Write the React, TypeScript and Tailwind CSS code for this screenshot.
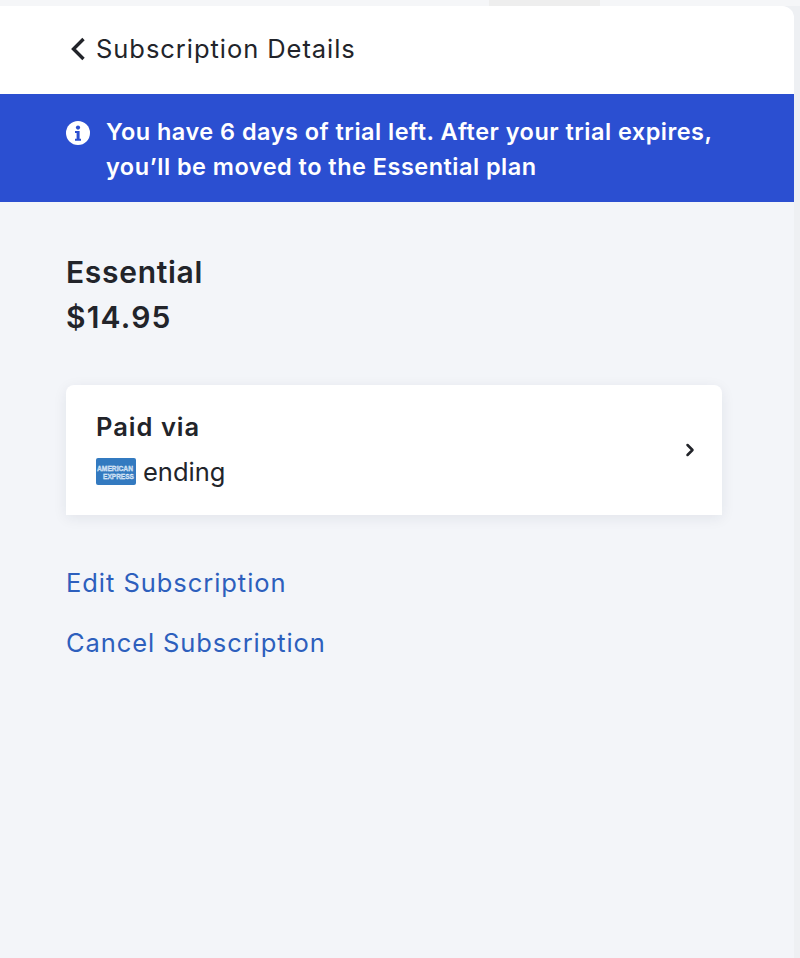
import React from "react";
import { ChevronRight } from "lucide-react";

const AmexLogo = () => (
  <svg width="40" height="27" viewBox="0 0 40 27" className="mb-[2px] shrink-0">
    <rect width="40" height="27" rx="2" fill="#337ac0" />
    <text x="1" y="13.2" fontFamily="Liberation Sans, sans-serif" fontSize="7" fontWeight="700" fill="#9cc3e8" stroke="#ffffff" strokeWidth="0.3" textLength="36" lengthAdjust="spacingAndGlyphs">
      AMERICAN
    </text>
    <text x="7" y="20.6" fontFamily="Liberation Sans, sans-serif" fontSize="7" fontWeight="700" fill="#9cc3e8" stroke="#ffffff" strokeWidth="0.3" textLength="31" lengthAdjust="spacingAndGlyphs">
      EXPRESS
    </text>
  </svg>
);

const InfoIcon = () => (
  <svg width="24" height="24" viewBox="0 0 24 24" className="shrink-0">
    <circle cx="12" cy="12" r="12" fill="#ffffff" />
    <circle cx="12" cy="6.6" r="2.1" fill="#2b4fd1" />
    <path d="M9 10h4.6v7.8h1.4v2H9v-2h1.6v-5.8H9z" fill="#2b4fd1" />
  </svg>
);

const BackChevron = () => (
  <svg width="16" height="24" viewBox="0 0 16 24" className="shrink-0">
    <path d="M13.5 2 3.5 12l10 10" fill="none" stroke="#22242a" strokeWidth="3.4" strokeLinejoin="miter" />
  </svg>
);

export default function App() {
  return (
    <div className="h-[958px] w-[800px] overflow-hidden bg-[#eef0f3] font-['Inter',sans-serif] text-[#22242a]">
      <div className="h-[6px] w-full bg-[#f5f6f8] pl-[489px]">
        <div className="h-[6px] w-[111px] bg-[#eeeeee]" />
      </div>
      <div className="flex h-[952px] w-[794px] flex-col overflow-hidden rounded-tr-xl bg-[#f3f5f9]">
        <div className="flex h-[88px] items-center gap-[10px] bg-white pl-[70px] pb-[2px]">
          <BackChevron />
          <span className="text-[25.5px] leading-[34px] tracking-[0.95px]">Subscription Details</span>
        </div>

        <div className="flex h-[108px] items-start bg-[#2b4fd1] pl-[66px] pt-[20px] text-white">
          <div className="pt-[7px]">
            <InfoIcon />
          </div>
          <p className="ml-[16px] text-[23.5px] font-semibold leading-[35px] tracking-[0.48px]">
            You have 6 days of trial left. After your trial expires,
            <br />
            you’ll be moved to the Essential plan
          </p>
        </div>

        <div className="flex flex-col pl-[66px] pt-[50px]">
          <div className="text-[30px] font-semibold leading-[40px] tracking-[0.7px]">Essential</div>
          <div className="mt-[5px] text-[30px] font-semibold leading-[40px] tracking-[1.2px]">$14.95</div>

          <div className="mt-[48px] flex h-[130px] w-[656px] items-center justify-between rounded-t-lg bg-white pl-[30px] pr-[22px] shadow-[0_3px_14px_rgba(30,40,70,0.08)]">
            <div className="flex flex-col pb-[4px]">
              <span className="text-[25.5px] font-semibold leading-[40px] tracking-[1px]">Paid via</span>
              <div className="mt-[8px] flex items-center gap-[7px]">
                <AmexLogo />
                <span className="text-[25.5px] leading-[34px]">ending</span>
              </div>
            </div>
            <ChevronRight size={20} strokeWidth={3} className="text-[#22242a]" />
          </div>

          <a className="mt-[50px] text-[25.5px] leading-[36px] tracking-[0.95px] text-[#2d5fbd]">Edit Subscription</a>
          <a className="mt-[24px] text-[25.5px] leading-[36px] tracking-[0.9px] text-[#2d5fbd]">Cancel Subscription</a>
        </div>
      </div>
    </div>
  );
}
